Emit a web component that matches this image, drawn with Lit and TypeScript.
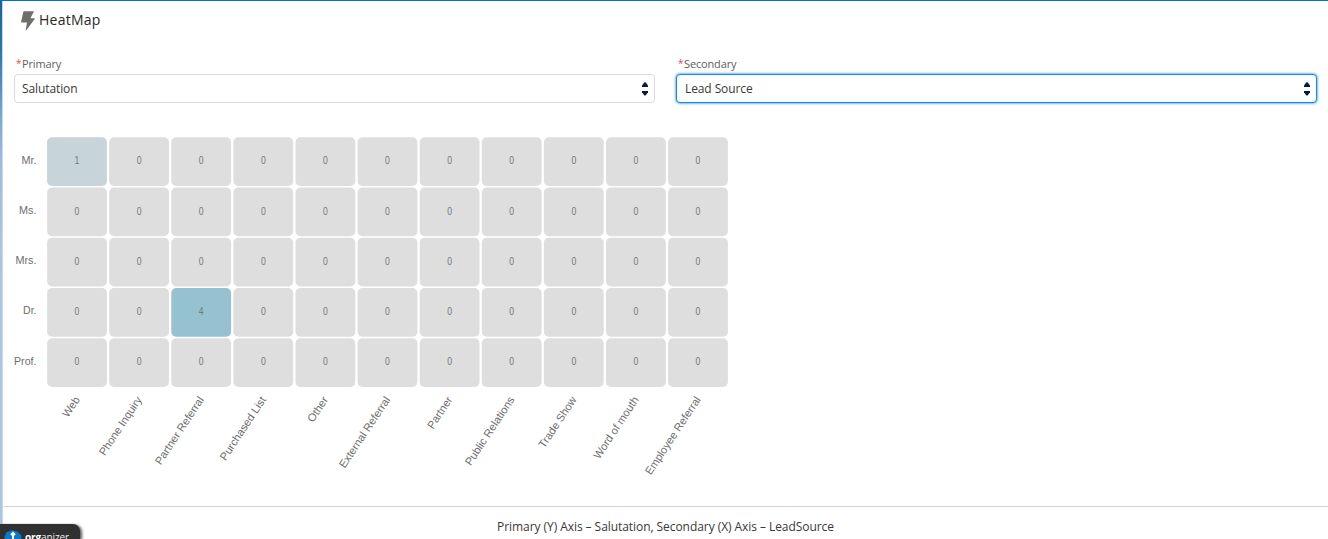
import { LitElement, html, svg, css } from "lit";
import { customElement, property } from "lit/decorators.js";

@customElement("axis-select")
class AxisSelect extends LitElement {
  @property() label = "";
  @property() value = "";
  @property({ type: Boolean, reflect: true }) active = false;

  static styles = css`
    :host { display: block; flex: 1; min-width: 0; }
    .label { height: 17px; line-height: 17px; padding-left: 2px; font-size: 11px; color: #62605e; display: flex; letter-spacing: -0.15px; }
    .star { color: #e0504c; width: 6px; font-size: 10px; }
    .box {
      box-sizing: border-box; height: 29px; margin-top: 2px; border: 1px solid #dddbda; border-radius: 4px;
      display: flex; align-items: center; justify-content: space-between; padding: 0 6px 0 7px;
      font-size: 12px; color: #3a3836; background: #fff; letter-spacing: -0.1px;
    }
    :host([active]) .box { border-color: #0a8cf0; box-shadow: 0 0 3px #0070d2; padding-left: 8px; }
    svg { display: block; }
  `;

  render() {
    return html`
      <div class="label"><span class="star">*</span><span>${this.label}</span></div>
      <div class="box">
        <span>${this.value}</span>
        <svg width="6" height="14" viewBox="0 0 6 14" fill="#061c3f">
          <path d="M2.2.6Q3 0 3.8.6L6 3.6V5H0V3.6Z" /><path d="M0 9H6V10.2L3.8 13.2Q3 14 2.2 13.2L0 10.2Z" />
        </svg>
      </div>
    `;
  }
}

const COLUMNS: [string, number][] = [
  ["Web", 22], ["Phone Inquiry", 68], ["Partner Referral", 79], ["Purchased List", 74],
  ["Other", 28], ["External Referral", 83], ["Partner", 36], ["Public Relations", 80],
  ["Trade Show", 59], ["Word of mouth", 72], ["Employee Referral", 91],
];
const ROWS: [string, number][] = [["Mr.", 15], ["Ms.", 17.5], ["Mrs.", 21], ["Dr.", 13.5], ["Prof.", 22.5]];
const COUNTS: Record<string, number> = { "0-0": 1, "3-2": 4 };
const FILL: Record<number, string> = { 0: "#dedede", 1: "#c7d4da", 4: "#96c1d1" };
const STEP_X = 62.1;
const STEP_Y = 50.25;

@customElement("heat-map")
class HeatMap extends LitElement {
  static styles = css`
    :host { display: block; }
    svg { display: block; font-family: "Liberation Sans", Arial, sans-serif; }
    .axis { font-size: 11.5px; fill: #6e6e6e; }
    .slanted { font-size: 11px; }
    .count { font-size: 10px; fill: #777; text-anchor: middle; }
    .end { text-anchor: end; }
  `;

  render() {
    return html`
      <svg width="740" height="360" viewBox="0 0 740 360">
        ${ROWS.map(([name, width], r) => svg`
          <text class="axis end" x="33.5" y=${38.7 + r * STEP_Y} textLength=${width} lengthAdjust="spacingAndGlyphs">${name}</text>
          ${COLUMNS.map((_, c) => {
            const n = COUNTS[`${r}-${c}`] ?? 0;
            return svg`
              <rect x=${44.1 + c * STEP_X} y=${12.3 + r * STEP_Y} width="59.8" height="48.6" rx="5" fill=${FILL[n]} />
              <text class="count" x=${74 + c * STEP_X} y=${39.4 + r * STEP_Y} textLength="4.8" lengthAdjust="spacingAndGlyphs">${n}</text>`;
          })}
        `)}
        ${COLUMNS.map(([name, width], c) => svg`
          <text class="axis slanted end" transform="translate(${77.2 + c * STEP_X} 274.7) rotate(-56.4)"
            textLength=${width} lengthAdjust="spacingAndGlyphs">${name}</text>
        `)}
      </svg>
    `;
  }
}

@customElement("app-root")
class AppRoot extends LitElement {
  static styles = css`
    :host { display: block; position: relative; height: 539px; overflow: hidden; font-family: "Open Sans", "Noto Sans", sans-serif; }
    .page { box-sizing: border-box; height: 539px; display: grid; grid-template-columns: 3px 1fr; border-top: 1px solid #0070d2; background: #fff; }
    .edge { background: linear-gradient(90deg, transparent 66%, #d0d7df 66%), linear-gradient(#16649c, #2a77ad 50px, #78a8d5 115px, #9bbce2 160px, #a9c4e6 250px, #a9c4e6); }
    .card { display: flex; flex-direction: column; min-width: 0; }
    header { display: flex; align-items: center; height: 36px; padding-left: 18px; font-size: 14px; color: #2b2826; letter-spacing: 0.25px; }
    header svg { margin-right: 4px; margin-top: 3px; }
    .selects { display: flex; gap: 21px; padding: 18px 11px 0; }
    heat-map { margin-top: 22px; height: 381px; overflow: hidden; }
    footer { flex: 1; border-top: 1px solid #d8d8d8; text-align: center; font-size: 12px; line-height: 40px; color: #3a3836; letter-spacing: -0.06px; }
    .badge {
      position: absolute; left: 0; bottom: 0; width: 80px; height: 15px; box-sizing: border-box;
      background: #303030; border-radius: 0 7px 0 0; box-shadow: 2px 1px 3px rgba(0, 0, 0, 0.65);
      display: flex; align-items: flex-start; padding: 6px 0 0 4px; color: #eee;
      font-size: 10px; line-height: 15px; letter-spacing: -0.1px;
    }
    .badge svg { flex: none; margin-right: 3px; }
    .badge b { color: #fff; }
  `;

  render() {
    return html`
      <div class="page">
        <div class="edge"></div>
        <div class="card">
          <header>
            <svg width="14" height="20" viewBox="0 0 14 20" fill="#706e6b">
              <path d="M3 .3H12.4Q13 .3 12.7 .9L9.4 7.3H13.4Q14 7.3 13.7 7.9L5.3 19.2Q4.6 19.7 4.7 18.9L6 11.4H.7Q0 11.4.1 10.8L2.3.9Q2.4.3 3 .3Z" />
            </svg>
            <span>HeatMap</span>
          </header>
          <div class="selects">
            <axis-select label="Primary" value="Salutation"></axis-select>
            <axis-select label="Secondary" value="Lead Source" active></axis-select>
          </div>
          <heat-map></heat-map>
          <footer>Primary (Y) Axis – Salutation, Secondary (X) Axis – LeadSource</footer>
        </div>
      </div>
      <div class="badge">
        <svg width="18" height="13" viewBox="0 0 18 13">
          <path d="M3.5 11A3.5 3.5 0 0 1 1.5 5Q1.5 1.8 5 1.5Q8-.8 11 1Q14 .5 15 3.5Q18 4.5 17.5 8Q16.8 11 14 11V13H4Z" fill="#0878c8" />
          <path d="M9 3V13M7 5L9 3L11 5" stroke="#fff" stroke-width="2" fill="none" />
        </svg>
        <span><b>org</b>anizer</span>
      </div>
    `;
  }
}
